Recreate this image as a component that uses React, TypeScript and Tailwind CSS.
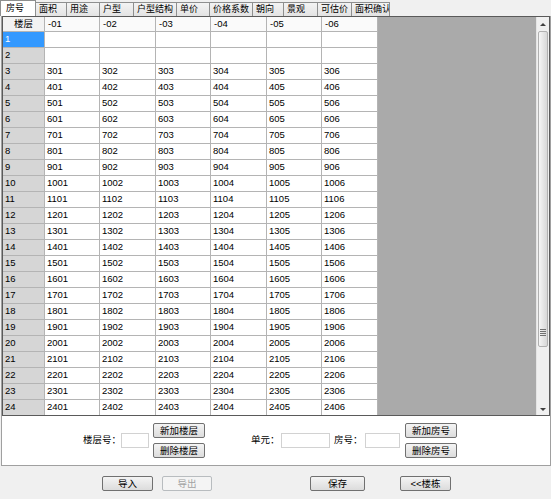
import React from 'react';

const tabs: [string, number][] = [
  ['房号', 36], ['面积', 31], ['用途', 33], ['户型', 34], ['户型结构', 43], ['单价', 33],
  ['价格系数', 43], ['朝向', 31], ['景观', 34], ['可估价', 34], ['面积确认', 38],
];

const colWidths = [55, 56, 55, 56, 55, 56];

function Btn({ label, w, disabled }: { label: string; w: number; disabled?: boolean }) {
  return (
    <button
      style={{ width: w }}
      className={
        disabled
          ? 'h-[15px] rounded-[2px] border border-[#b8bcbf] bg-[#f4f4f4] text-[#a2a2a2] flex items-center justify-center leading-none'
          : 'h-[15px] rounded-[2px] border border-[#707070] bg-gradient-to-b from-[#f4f4f4] to-[#dcdcdc] text-black flex items-center justify-center leading-none'
      }
    >
      {label}
    </button>
  );
}

function ScrollBar() {
  return (
    <div className="w-[13px] h-full bg-[#f0f0f0] border-l border-[#e4e4e4] flex flex-col">
      <div className="h-[14px] flex items-center justify-center">
        <div className="w-0 h-0 border-l-[3px] border-r-[3px] border-b-[3px] border-l-transparent border-r-transparent border-b-[#404040]" />
      </div>
      <div className="h-[316px] mx-[1px] rounded-[2px] border border-[#b0b0b0] bg-gradient-to-r from-[#f6f6f6] via-[#e6e6e6] to-[#d8d8d8] flex flex-col items-center justify-end pb-[10px] gap-[1px]">
        <div className="w-[6px] h-px bg-[#707070]" />
        <div className="w-[6px] h-px bg-[#707070]" />
        <div className="w-[6px] h-px bg-[#707070]" />
        <div className="w-[6px] h-px bg-[#707070]" />
      </div>
      <div className="flex-1" />
      <div className="h-[12px] flex items-center justify-center">
        <div className="w-0 h-0 border-l-[3px] border-r-[3px] border-t-[3px] border-l-transparent border-r-transparent border-t-[#404040]" />
      </div>
    </div>
  );
}

export default function App() {
  const rows = Array.from({ length: 24 }, (_, i) => i + 1);

  return (
    <div className="w-[551px] h-[499px] bg-[#f0f0f0] flex flex-col overflow-hidden text-[9.5px] text-black font-['Liberation_Sans','Noto_Sans_CJK_SC',sans-serif]">
      {/* Tabs */}
      <div className="h-[16px] flex items-end text-[9px]">
        {tabs.map(([t, w], i) =>
          i === 0 ? (
            <div key={t} style={{ width: w }} className="h-[16px] bg-white border-t border-l border-r border-[#8e8f8f] pl-[5px] flex items-center whitespace-nowrap">
              {t}
            </div>
          ) : (
            <div key={t} style={{ width: w }} className="h-[14px] border-t border-r border-[#8e8f8f] bg-gradient-to-b from-[#f3f3f3] to-[#e3e3e3] pl-[3px] flex items-center whitespace-nowrap overflow-hidden">
              {t}
            </div>
          )
        )}
      </div>

      {/* Tab page */}
      <div className="flex flex-col pl-[1px]">
        <div className="flex flex-col border-l border-r border-b border-[#a0a0a0] bg-white">
          {/* Grid */}
          <div className="h-[400px] flex border border-[#5a5a5a] overflow-hidden">
            <div className="w-[375px] flex flex-col overflow-hidden">
              <div className="h-[15px] flex shrink-0">
                <div className="w-[42px] border-r border-b border-[#b4b4b4] bg-[#f2f2f2] flex items-center justify-center">楼层</div>
                {colWidths.map((w, c) => (
                  <div key={c} style={{ width: w }} className="border-r border-b border-[#b4b4b4] bg-[#fafafa] flex items-center pl-[3px]">
                    -0{c + 1}
                  </div>
                ))}
              </div>
              {rows.map((r) => (
                <div key={r} className="h-[16px] flex shrink-0">
                  <div
                    className={
                      r === 1
                        ? 'w-[42px] border-r border-b border-[#b4b4b4] bg-[#3399ff] text-white flex items-center pl-[2px]'
                        : 'w-[42px] border-r border-b border-[#b4b4b4] bg-[#d6d6d6] flex items-center pl-[2px]'
                    }
                  >
                    {r}
                  </div>
                  {colWidths.map((w, c) => (
                    <div key={c} style={{ width: w }} className="border-r border-b border-[#b4b4b4] bg-white flex items-center pl-[2px]">
                      {r >= 3 ? `${r}0${c + 1}` : ''}
                    </div>
                  ))}
                </div>
              ))}
            </div>
            <div className="flex-1 bg-[#aaaaaa]" />
            <ScrollBar />
          </div>

          {/* Edit panel */}
          <div className="h-[49px] flex items-center">
            <span className="ml-[81px] w-[34px] whitespace-nowrap">楼层号：</span>
            <input className="ml-[4px] w-[28px] h-[15px] border border-[#d2d2d2] bg-white outline-none" />
            <div className="ml-[4px] flex flex-col gap-[5px]">
              <Btn label="新加楼层" w={52} />
              <Btn label="删除楼层" w={52} />
            </div>
            <span className="ml-[46px] w-[30px] whitespace-nowrap">单元：</span>
            <input className="w-[49px] h-[15px] border border-[#d2d2d2] bg-white outline-none" />
            <span className="ml-[4px] w-[31px] whitespace-nowrap">房号：</span>
            <input className="w-[35px] h-[15px] border border-[#d2d2d2] bg-white outline-none" />
            <div className="ml-[5px] flex flex-col gap-[5px]">
              <Btn label="新加房号" w={52} />
              <Btn label="删除房号" w={52} />
            </div>
          </div>
        </div>
      </div>

      {/* Bottom bar */}
      <div className="flex items-start pt-[10px]">
        <div className="ml-[102px]"><Btn label="导入" w={51} /></div>
        <div className="ml-[9px]"><Btn label="导出" w={50} disabled /></div>
        <div className="ml-[98px]"><Btn label="保存" w={55} /></div>
        <div className="ml-[35px]"><Btn label="<<楼栋" w={51} /></div>
      </div>
    </div>
  );
}
